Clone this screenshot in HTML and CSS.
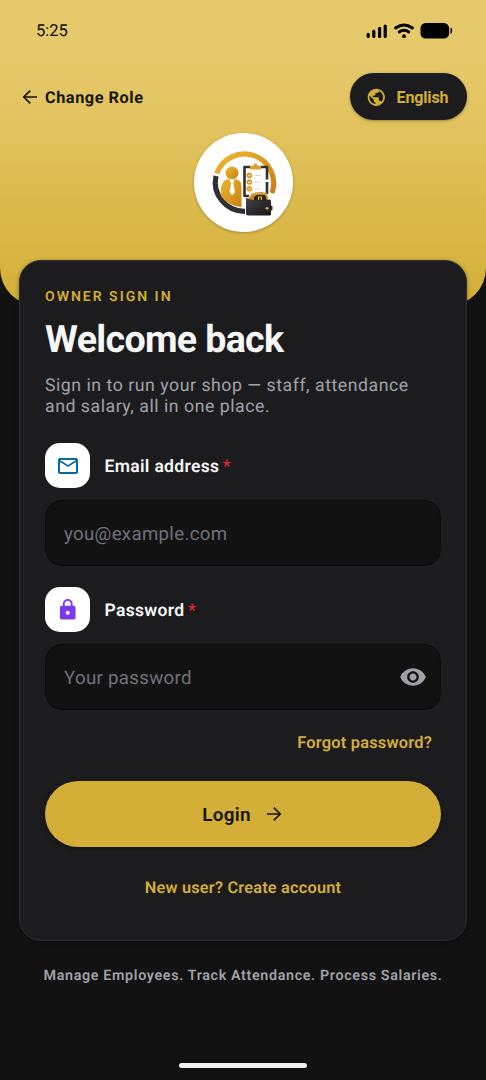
FILE: index.html
```html
<!DOCTYPE html>
<html lang="en">
<head>
<meta charset="utf-8">
<meta name="viewport" content="width=device-width, initial-scale=1">
<title>Owner sign in</title>
<link rel="stylesheet" href="styles.css">
</head>
<body>
<div class="screen">
  <header class="hero">
    <div class="status">
      <span class="time">5:25</span>
      <svg class="status-icons" viewBox="0 0 88 18" width="88" height="18">
        <g stroke="#000" stroke-width="3.2" stroke-linecap="round">
          <path d="M2.200 12.300v2.200M7.800 9.300v5.200M13.600 6.300v8.200M19.200 4v10.500"/>
        </g>
        <g fill="none" stroke="#000" stroke-width="2.900" stroke-linecap="round">
          <path d="M29.600 6Q38 -0.100 46.400 6"/>
          <path d="M33.200 10Q38 6.400 42.800 10"/>
        </g>
        <circle cx="38" cy="14.200" r="1.900"/>
        <rect x="54.500" y="1" width="28.600" height="15.600" rx="5.200"/>
        <path d="M84.500 5.300Q86.200 6 86.200 8.800T84.500 12.300z"/>
      </svg>
    </div>
    <nav class="topbar">
      <a class="back">
        <svg viewBox="0 0 16 16" width="16" height="16" fill="none" stroke="#171508" stroke-width="1.700"><path d="M15 8H2M8.200 1.600 1.800 8l6.400 6.400"/></svg>
        <span>Change Role</span>
      </a>
      <button class="lang">
        <svg viewBox="0 0 24 24" width="20.600" height="20.600" fill="#d4af37"><path d="M12 2C6.480 2 2 6.480 2 12s4.480 10 10 10 10-4.480 10-10S17.520 2 12 2zm-1 17.930c-3.950-.49-7-3.850-7-7.930 0-.62.080-1.210.210-1.790L9 15v1c0 1.100.900 2 2 2v1.930zm6.900-2.540c-.26-.81-1-1.390-1.900-1.390h-1v-3c0-.55-.45-1-1-1H8v-2h2c.55 0 1-.45 1-1V7h2c1.100 0 2-.900 2-2v-.410c2.930 1.190 5 4.060 5 7.410 0 2.080-.8 3.970-2.100 5.390z"/></svg>
        <span>English</span>
      </button>
    </nav>
    <div class="logo">
      <svg viewBox="0 0 110 110" width="110" height="110">
        <defs>
          <linearGradient id="gold" x1="0" y1="0" x2="1" y2="1"><stop offset="0" stop-color="#efb62f"/><stop offset="1" stop-color="#c77f12"/></linearGradient>
          <linearGradient id="ink" x1="0" y1="0" x2="1" y2="1"><stop offset="0" stop-color="#444448"/><stop offset="1" stop-color="#151518"/></linearGradient>
        </defs>
        <path d="M28.800 45.500A29 29 0 0 1 84 65" fill="none" stroke="url(#gold)" stroke-width="5.200"/>
        <path d="M28 48A29 29 0 0 0 57 83.300" fill="none" stroke="#303034" stroke-width="5.200"/>
        <circle cx="44" cy="45" r="6.500" fill="url(#gold)"/>
        <path d="M33 68C32 56 35 51.500 41 51L44 55 47 51Q53.500 52 53.500 58V79Q40 78 33 68z" fill="url(#gold)"/>
        <path d="M41.500 51.500h5L45.300 55l1.700 9-2.800 3.200-2.700-3.200 1.500-9z" fill="#fff"/>
        <path d="M62 39h-5.500v29H61M72.500 39H79v12.500M79 54v12" fill="none" stroke="#303034" stroke-width="2.600" stroke-linejoin="round"/>
        <path d="M62 41.500v-3.800h3.200Q67.400 33.500 69.800 37.700H73v3.800z" fill="#dda02b"/>
        <g fill="#d99b28"><circle cx="61.300" cy="47.200" r="2.800"/><circle cx="61.300" cy="54" r="2.800"/><circle cx="61.300" cy="60.800" r="2.800"/></g>
        <path d="m60 47.200 1 1 2-2M60 54l1 1 2-2M60 60.800l1 1 2-2" fill="none" stroke="#fff" stroke-width=".8"/>
        <path d="M66.500 47.500H73M66.500 54H73M66.500 60.800H72" stroke="#ccc" stroke-width=".8"/>
        <path d="m60 72 3-6 5-1.500 5-.5 6 1 1.500 8z" fill="#c78d23"/>
        <path d="M66 73v-4l3-2h8l2 6z" fill="#26221a"/><path d="M70.500 72v-3h3v3" fill="none" stroke="#edb234" stroke-width="1.200"/>
        <path d="m60.500 69 4-2M64 66l9-1M75 65l4 2" stroke="#f5ca5b" stroke-width="1" stroke-dasharray="1 1"/>
        <path d="M58 70Q70 74 81.500 71.500q1.500 0 1.500 2V86q0 1.500-1.500 1.500H60q-2 0-2-2z" fill="url(#ink)"/>
        <rect x="76.500" y="77.500" width="8" height="5.200" rx="1.600" fill="#27272a"/><circle cx="79" cy="80.200" r="1.300" fill="#f3bd32"/>
      </svg>
    </div>
  </header>

  <main class="card">
    <p class="eyebrow">OWNER SIGN IN</p>
    <h1 class="title">Welcome back</h1>
    <p class="subtitle">Sign in to run your shop — staff, attendance<br>and salary, all in one place.</p>

    <div class="label">
      <span class="tile"><svg viewBox="0 0 24 24" width="24" height="24" fill="#0369a1"><path d="M22 6c0-1.100-.900-2-2-2H4c-1.100 0-2 .900-2 2v12c0 1.100.900 2 2 2h16c1.100 0 2-.900 2-2V6zm-2 0-8 5-8-5h16zm0 12H4V8l8 5 8-5v10z"/></svg></span>
      <span class="label-text">Email address</span><span class="star">*</span>
    </div>
    <div class="field"><span>you@example.com</span></div>

    <div class="label second">
      <span class="tile"><svg viewBox="0 0 24 24" width="23.500" height="23.500" fill="#7c3aed"><path d="M18 8h-1V6c0-2.760-2.240-5-5-5S7 3.240 7 6v2H6c-1.100 0-2 .900-2 2v10c0 1.100.900 2 2 2h12c1.100 0 2-.900 2-2V10c0-1.100-.900-2-2-2zm-6 9c-1.100 0-2-.900-2-2s.900-2 2-2 2 .900 2 2-.900 2-2 2zm3.100-9H8.900V6c0-1.710 1.390-3.100 3.100-3.100s3.100 1.390 3.100 3.100v2z"/></svg></span>
      <span class="label-text">Password</span><span class="star">*</span>
    </div>
    <div class="field">
      <span>Your password</span>
      <svg class="eye" viewBox="0 0 24 24" width="28" height="28" fill="#a1a1aa"><path d="M12 4.500C7 4.500 2.730 7.610 1 12c1.730 4.390 6 7.500 11 7.500s9.270-3.110 11-7.500c-1.730-4.390-6-7.500-11-7.500zM12 17c-2.760 0-5-2.240-5-5s2.240-5 5-5 5 2.240 5 5-2.240 5-5 5zm0-8c-1.660 0-3 1.340-3 3s1.340 3 3 3 3-1.340 3-3-1.340-3-3-3z"/></svg>
    </div>

    <a class="forgot">Forgot password?</a>
    <button class="login">
      <span>Login</span>
      <svg viewBox="0 0 16 16" width="16" height="16" fill="none" stroke="#171508" stroke-width="1.700"><path d="M1 8h13M7.800 1.600 14.200 8l-6.400 6.400"/></svg>
    </button>
    <a class="create">New user? Create account</a>
  </main>

  <footer class="tagline">Manage Employees. Track Attendance. Process Salaries.</footer>
  <div class="home"></div>
</div>
</body>
</html>
```

FILE: styles.css
```css
* { box-sizing: border-box; }

body {
  margin: 0;
  background: #121212;
  font-family: Roboto, "Liberation Sans", sans-serif;
  text-rendering: geometricPrecision;
}

p, h1 { margin: 0; }

button { border: 0; font-family: inherit; }

svg { display: block; flex: none; }

.screen {
  display: flex;
  flex-direction: column;
  height: 1080px;
  overflow: hidden;
}

.hero {
  flex: none;
  height: 306px;
  border-radius: 0 0 38px 38px;
  background: linear-gradient(#e6c96b 0, #e6c96b 60px, #d4af37 306px);
}

.status {
  display: flex;
  justify-content: space-between;
  height: 61px;
  padding: 22px 32px 0 36px;
}

.time { padding-top: 1px; font-size: 16.500px; line-height: 18px; color: #0c0b05; }

.topbar {
  display: flex;
  align-items: center;
  justify-content: space-between;
  height: 72px;
  padding: 0 19.500px 0 22px;
}

.back {
  display: flex;
  align-items: center;
  gap: 7px;
  font-size: 16.300px;
  font-weight: 700;
  letter-spacing: .550px;
  color: #171508;
}

.lang {
  display: flex;
  align-items: center;
  gap: 10px;
  width: 117px;
  height: 47px;
  margin-bottom: 1px;
  padding: 1px 0 0 16.500px;
  border-radius: 24px;
  background: #1c1c1e;
  color: #d4af37;
  font-size: 16px;
  font-weight: 700;
  letter-spacing: -.15px;
  box-shadow: 0 1px 3px rgba(0, 0, 0, .3);
}

.logo {
  display: flex;
  align-items: center;
  justify-content: center;
  width: 99px;
  height: 99px;
  margin: 0 auto;
  border-radius: 50%;
  background: #fff;
  box-shadow: 0 1px 3px rgba(0, 0, 0, .25);
}

.card {
  position: relative;
  display: flex;
  flex: none;
  flex-direction: column;
  height: 681px;
  margin: -46px 19px 0;
  padding: 26px 25px 0;
  border: 1px solid #2e2e31;
  border-radius: 22px;
  background: #1c1c1e;
  box-shadow: 0 1px 4px rgba(0, 0, 0, .4);
}

.eyebrow {
  font-size: 14px;
  line-height: 20px;
  font-weight: 600;
  letter-spacing: 2px;
  color: #d4af37;
}

.title {
  margin-top: 11px;
  font-size: 37.600px;
  line-height: 44px;
  font-weight: 700;
  letter-spacing: -.67px;
  color: #f7f7f8;
}

.subtitle {
  margin-top: 14px;
  font-size: 17.700px;
  line-height: 21px;
  letter-spacing: .530px;
  color: #a1a1aa;
}

.label {
  display: flex;
  align-items: center;
  height: 45px;
  margin-top: 25px;
}

.label.second { margin-top: 21px; }

.tile {
  display: grid;
  place-items: center;
  width: 45px;
  height: 45px;
  margin-right: 14.500px;
  border-radius: 15px;
  background: #fff;
}

.label-text {
  padding-top: 2px;
  font-size: 17.500px;
  font-weight: 600;
  letter-spacing: .33px;
  color: #f7f7f8;
}

.star {
  margin-left: 3.500px;
  padding-top: 2px;
  font-size: 17.500px;
  font-weight: 600;
  color: #dc2626;
}

.field {
  display: flex;
  align-items: center;
  justify-content: space-between;
  height: 66px;
  margin-top: 12px;
  padding: 1px 13px 0 18px;
  border: 1px solid #0b0b0b;
  border-radius: 17px;
  background: #121212;
  color: #71717a;
  font-size: 18.700px;
  letter-spacing: .3px;
}

.eye { margin-bottom: 2px; }

.forgot {
  align-self: flex-end;
  margin: 24px 9px 0 0;
  font-size: 16.400px;
  line-height: 20px;
  font-weight: 600;
  letter-spacing: .22px;
  color: #d4af37;
}

.login {
  display: flex;
  flex: none;
  align-items: center;
  justify-content: center;
  gap: 15px;
  height: 66px;
  margin-top: 27px;
  padding: 0 2px 0 0;
  border-radius: 33px;
  background: #d4af37;
  color: #171508;
  font-size: 18.900px;
  font-weight: 600;
  letter-spacing: .3px;
  box-shadow: 0 1px 4px rgba(0, 0, 0, .5);
}

.create {
  align-self: center;
  margin-top: 31px;
  font-size: 16.300px;
  line-height: 20px;
  font-weight: 600;
  letter-spacing: .22px;
  color: #d4af37;
}

.tagline {
  margin-top: 26px;
  text-align: center;
  font-size: 14.300px;
  line-height: 18px;
  font-weight: 600;
  letter-spacing: .650px;
  color: #a1a1aa;
}

.home {
  width: 128px;
  height: 5px;
  margin: auto auto 12px;
  border-radius: 3px;
  background: #f1f1f1;
}
```
